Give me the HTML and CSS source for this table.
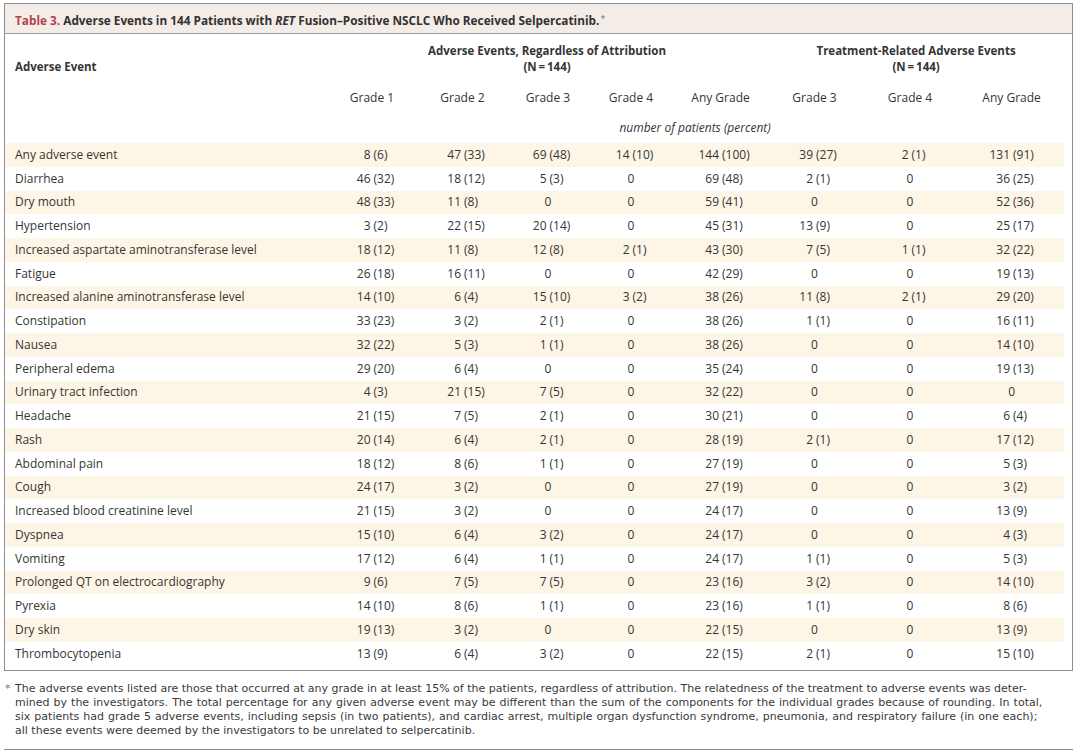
FILE: index.html
```html
<!DOCTYPE html>
<html lang="en">
<head>
<meta charset="utf-8">
<title>Table 3. Adverse Events</title>
<link rel="stylesheet" href="styles.css">
</head>
<body>
<div class="page">
  <div class="box">
    <div class="title"><span class="tnum">Table 3.</span> Adverse Events in 144 Patients with <i>RET</i> Fusion–Positive NSCLC Who Received Selpercatinib.<span class="star">*</span></div>
    <table class="ae">
      <colgroup>
        <col class="c-lbl"><col class="c-g1"><col class="c-g2"><col class="c-g3"><col class="c-g4"><col class="c-any"><col class="c-tg3"><col class="c-tg4"><col class="c-tany">
      </colgroup>
      <thead>
        <tr class="grp">
          <th class="lbl">Adverse Event</th>
          <th colspan="5">Adverse Events, Regardless of Attribution<br>(N&#8201;=&#8201;144)</th>
          <th colspan="3">Treatment-Related Adverse Events<br>(N&#8201;=&#8201;144)</th>
        </tr>
        <tr class="grades">
          <th class="lbl"></th>
          <th>Grade 1</th><th>Grade 2</th><th>Grade 3</th><th>Grade 4</th><th>Any Grade</th><th>Grade 3</th><th>Grade 4</th><th>Any Grade</th>
        </tr>
        <tr class="unit">
          <th class="lbl"></th>
          <th colspan="8">number of patients (percent)</th>
        </tr>
      </thead>
      <tbody>
        <tr class="sh"><td class="lbl">Any adverse event</td><td><span class="v"><span class="n">8</span><span class="p">(6)</span></span></td><td><span class="v"><span class="n">47</span><span class="p">(33)</span></span></td><td><span class="v"><span class="n">69</span><span class="p">(48)</span></span></td><td><span class="v"><span class="n">14</span><span class="p">(10)</span></span></td><td><span class="v"><span class="n">144</span><span class="p">(100)</span></span></td><td><span class="v"><span class="n">39</span><span class="p">(27)</span></span></td><td><span class="v"><span class="n">2</span><span class="p">(1)</span></span></td><td><span class="v"><span class="n">131</span><span class="p">(91)</span></span></td></tr>
        <tr><td class="lbl">Diarrhea</td><td><span class="v"><span class="n">46</span><span class="p">(32)</span></span></td><td><span class="v"><span class="n">18</span><span class="p">(12)</span></span></td><td><span class="v"><span class="n">5</span><span class="p">(3)</span></span></td><td class="z">0</td><td><span class="v"><span class="n">69</span><span class="p">(48)</span></span></td><td><span class="v"><span class="n">2</span><span class="p">(1)</span></span></td><td class="z">0</td><td><span class="v"><span class="n">36</span><span class="p">(25)</span></span></td></tr>
        <tr class="sh"><td class="lbl">Dry mouth</td><td><span class="v"><span class="n">48</span><span class="p">(33)</span></span></td><td><span class="v"><span class="n">11</span><span class="p">(8)</span></span></td><td class="z">0</td><td class="z">0</td><td><span class="v"><span class="n">59</span><span class="p">(41)</span></span></td><td class="z">0</td><td class="z">0</td><td><span class="v"><span class="n">52</span><span class="p">(36)</span></span></td></tr>
        <tr><td class="lbl">Hypertension</td><td><span class="v"><span class="n">3</span><span class="p">(2)</span></span></td><td><span class="v"><span class="n">22</span><span class="p">(15)</span></span></td><td><span class="v"><span class="n">20</span><span class="p">(14)</span></span></td><td class="z">0</td><td><span class="v"><span class="n">45</span><span class="p">(31)</span></span></td><td><span class="v"><span class="n">13</span><span class="p">(9)</span></span></td><td class="z">0</td><td><span class="v"><span class="n">25</span><span class="p">(17)</span></span></td></tr>
        <tr class="sh"><td class="lbl">Increased aspartate aminotransferase level</td><td><span class="v"><span class="n">18</span><span class="p">(12)</span></span></td><td><span class="v"><span class="n">11</span><span class="p">(8)</span></span></td><td><span class="v"><span class="n">12</span><span class="p">(8)</span></span></td><td><span class="v"><span class="n">2</span><span class="p">(1)</span></span></td><td><span class="v"><span class="n">43</span><span class="p">(30)</span></span></td><td><span class="v"><span class="n">7</span><span class="p">(5)</span></span></td><td><span class="v"><span class="n">1</span><span class="p">(1)</span></span></td><td><span class="v"><span class="n">32</span><span class="p">(22)</span></span></td></tr>
        <tr><td class="lbl">Fatigue</td><td><span class="v"><span class="n">26</span><span class="p">(18)</span></span></td><td><span class="v"><span class="n">16</span><span class="p">(11)</span></span></td><td class="z">0</td><td class="z">0</td><td><span class="v"><span class="n">42</span><span class="p">(29)</span></span></td><td class="z">0</td><td class="z">0</td><td><span class="v"><span class="n">19</span><span class="p">(13)</span></span></td></tr>
        <tr class="sh"><td class="lbl">Increased alanine aminotransferase level</td><td><span class="v"><span class="n">14</span><span class="p">(10)</span></span></td><td><span class="v"><span class="n">6</span><span class="p">(4)</span></span></td><td><span class="v"><span class="n">15</span><span class="p">(10)</span></span></td><td><span class="v"><span class="n">3</span><span class="p">(2)</span></span></td><td><span class="v"><span class="n">38</span><span class="p">(26)</span></span></td><td><span class="v"><span class="n">11</span><span class="p">(8)</span></span></td><td><span class="v"><span class="n">2</span><span class="p">(1)</span></span></td><td><span class="v"><span class="n">29</span><span class="p">(20)</span></span></td></tr>
        <tr><td class="lbl">Constipation</td><td><span class="v"><span class="n">33</span><span class="p">(23)</span></span></td><td><span class="v"><span class="n">3</span><span class="p">(2)</span></span></td><td><span class="v"><span class="n">2</span><span class="p">(1)</span></span></td><td class="z">0</td><td><span class="v"><span class="n">38</span><span class="p">(26)</span></span></td><td><span class="v"><span class="n">1</span><span class="p">(1)</span></span></td><td class="z">0</td><td><span class="v"><span class="n">16</span><span class="p">(11)</span></span></td></tr>
        <tr class="sh"><td class="lbl">Nausea</td><td><span class="v"><span class="n">32</span><span class="p">(22)</span></span></td><td><span class="v"><span class="n">5</span><span class="p">(3)</span></span></td><td><span class="v"><span class="n">1</span><span class="p">(1)</span></span></td><td class="z">0</td><td><span class="v"><span class="n">38</span><span class="p">(26)</span></span></td><td class="z">0</td><td class="z">0</td><td><span class="v"><span class="n">14</span><span class="p">(10)</span></span></td></tr>
        <tr><td class="lbl">Peripheral edema</td><td><span class="v"><span class="n">29</span><span class="p">(20)</span></span></td><td><span class="v"><span class="n">6</span><span class="p">(4)</span></span></td><td class="z">0</td><td class="z">0</td><td><span class="v"><span class="n">35</span><span class="p">(24)</span></span></td><td class="z">0</td><td class="z">0</td><td><span class="v"><span class="n">19</span><span class="p">(13)</span></span></td></tr>
        <tr class="sh"><td class="lbl">Urinary tract infection</td><td><span class="v"><span class="n">4</span><span class="p">(3)</span></span></td><td><span class="v"><span class="n">21</span><span class="p">(15)</span></span></td><td><span class="v"><span class="n">7</span><span class="p">(5)</span></span></td><td class="z">0</td><td><span class="v"><span class="n">32</span><span class="p">(22)</span></span></td><td class="z">0</td><td class="z">0</td><td class="z">0</td></tr>
        <tr><td class="lbl">Headache</td><td><span class="v"><span class="n">21</span><span class="p">(15)</span></span></td><td><span class="v"><span class="n">7</span><span class="p">(5)</span></span></td><td><span class="v"><span class="n">2</span><span class="p">(1)</span></span></td><td class="z">0</td><td><span class="v"><span class="n">30</span><span class="p">(21)</span></span></td><td class="z">0</td><td class="z">0</td><td><span class="v"><span class="n">6</span><span class="p">(4)</span></span></td></tr>
        <tr class="sh"><td class="lbl">Rash</td><td><span class="v"><span class="n">20</span><span class="p">(14)</span></span></td><td><span class="v"><span class="n">6</span><span class="p">(4)</span></span></td><td><span class="v"><span class="n">2</span><span class="p">(1)</span></span></td><td class="z">0</td><td><span class="v"><span class="n">28</span><span class="p">(19)</span></span></td><td><span class="v"><span class="n">2</span><span class="p">(1)</span></span></td><td class="z">0</td><td><span class="v"><span class="n">17</span><span class="p">(12)</span></span></td></tr>
        <tr><td class="lbl">Abdominal pain</td><td><span class="v"><span class="n">18</span><span class="p">(12)</span></span></td><td><span class="v"><span class="n">8</span><span class="p">(6)</span></span></td><td><span class="v"><span class="n">1</span><span class="p">(1)</span></span></td><td class="z">0</td><td><span class="v"><span class="n">27</span><span class="p">(19)</span></span></td><td class="z">0</td><td class="z">0</td><td><span class="v"><span class="n">5</span><span class="p">(3)</span></span></td></tr>
        <tr class="sh"><td class="lbl">Cough</td><td><span class="v"><span class="n">24</span><span class="p">(17)</span></span></td><td><span class="v"><span class="n">3</span><span class="p">(2)</span></span></td><td class="z">0</td><td class="z">0</td><td><span class="v"><span class="n">27</span><span class="p">(19)</span></span></td><td class="z">0</td><td class="z">0</td><td><span class="v"><span class="n">3</span><span class="p">(2)</span></span></td></tr>
        <tr><td class="lbl">Increased blood creatinine level</td><td><span class="v"><span class="n">21</span><span class="p">(15)</span></span></td><td><span class="v"><span class="n">3</span><span class="p">(2)</span></span></td><td class="z">0</td><td class="z">0</td><td><span class="v"><span class="n">24</span><span class="p">(17)</span></span></td><td class="z">0</td><td class="z">0</td><td><span class="v"><span class="n">13</span><span class="p">(9)</span></span></td></tr>
        <tr class="sh"><td class="lbl">Dyspnea</td><td><span class="v"><span class="n">15</span><span class="p">(10)</span></span></td><td><span class="v"><span class="n">6</span><span class="p">(4)</span></span></td><td><span class="v"><span class="n">3</span><span class="p">(2)</span></span></td><td class="z">0</td><td><span class="v"><span class="n">24</span><span class="p">(17)</span></span></td><td class="z">0</td><td class="z">0</td><td><span class="v"><span class="n">4</span><span class="p">(3)</span></span></td></tr>
        <tr><td class="lbl">Vomiting</td><td><span class="v"><span class="n">17</span><span class="p">(12)</span></span></td><td><span class="v"><span class="n">6</span><span class="p">(4)</span></span></td><td><span class="v"><span class="n">1</span><span class="p">(1)</span></span></td><td class="z">0</td><td><span class="v"><span class="n">24</span><span class="p">(17)</span></span></td><td><span class="v"><span class="n">1</span><span class="p">(1)</span></span></td><td class="z">0</td><td><span class="v"><span class="n">5</span><span class="p">(3)</span></span></td></tr>
        <tr class="sh"><td class="lbl">Prolonged QT on electrocardiography</td><td><span class="v"><span class="n">9</span><span class="p">(6)</span></span></td><td><span class="v"><span class="n">7</span><span class="p">(5)</span></span></td><td><span class="v"><span class="n">7</span><span class="p">(5)</span></span></td><td class="z">0</td><td><span class="v"><span class="n">23</span><span class="p">(16)</span></span></td><td><span class="v"><span class="n">3</span><span class="p">(2)</span></span></td><td class="z">0</td><td><span class="v"><span class="n">14</span><span class="p">(10)</span></span></td></tr>
        <tr><td class="lbl">Pyrexia</td><td><span class="v"><span class="n">14</span><span class="p">(10)</span></span></td><td><span class="v"><span class="n">8</span><span class="p">(6)</span></span></td><td><span class="v"><span class="n">1</span><span class="p">(1)</span></span></td><td class="z">0</td><td><span class="v"><span class="n">23</span><span class="p">(16)</span></span></td><td><span class="v"><span class="n">1</span><span class="p">(1)</span></span></td><td class="z">0</td><td><span class="v"><span class="n">8</span><span class="p">(6)</span></span></td></tr>
        <tr class="sh"><td class="lbl">Dry skin</td><td><span class="v"><span class="n">19</span><span class="p">(13)</span></span></td><td><span class="v"><span class="n">3</span><span class="p">(2)</span></span></td><td class="z">0</td><td class="z">0</td><td><span class="v"><span class="n">22</span><span class="p">(15)</span></span></td><td class="z">0</td><td class="z">0</td><td><span class="v"><span class="n">13</span><span class="p">(9)</span></span></td></tr>
        <tr><td class="lbl">Thrombocytopenia</td><td><span class="v"><span class="n">13</span><span class="p">(9)</span></span></td><td><span class="v"><span class="n">6</span><span class="p">(4)</span></span></td><td><span class="v"><span class="n">3</span><span class="p">(2)</span></span></td><td class="z">0</td><td><span class="v"><span class="n">22</span><span class="p">(15)</span></span></td><td><span class="v"><span class="n">2</span><span class="p">(1)</span></span></td><td class="z">0</td><td><span class="v"><span class="n">15</span><span class="p">(10)</span></span></td></tr>
      </tbody>
    </table>
  </div>
  <div class="note">
    <span class="ln first"><span class="mark">*</span>The adverse events listed are those that occurred at any grade in at least 15% of the patients, regardless of attribution. The relatedness of the treatment to adverse events was deter-</span>
    <span class="ln wide2">mined by the investigators. The total percentage for any given adverse event may be different than the sum of the components for the individual grades because of rounding. In total,</span>
    <span class="ln wide3">six patients had grade 5 adverse events, including sepsis (in two patients), and cardiac arrest, multiple organ dysfunction syndrome, pneumonia, and respiratory failure (in one each);</span>
    <span class="ln">all these events were deemed by the investigators to be unrelated to selpercatinib.</span>
  </div>
  <div class="rule"></div>
</div>
</body>
</html>
```

FILE: styles.css
```css
html, body {
  margin: 0;
  padding: 0;
  background: #ffffff;
}

body {
  font-family: "Open Sans", "Noto Sans", sans-serif;
  font-size: 12px;
  color: #353535;
}

.page {
  width: 1080px;
  height: 754px;
  padding: 3px 0 0 4px;
  box-sizing: border-box;
}

.box {
  width: 1069px;
  box-sizing: border-box;
  border: 1px solid #8e8e8e;
  padding-bottom: 4px;
}

.title {
  height: 30px;
  box-sizing: border-box;
  border-bottom: 1px solid #9a9a9a;
  background: #f3ece7;
  padding-left: 10px;
  line-height: 29px;
  font-weight: 700;
  font-size: 11.8px;
  color: #333333;
  white-space: nowrap;
}

.title .tnum {
  color: #b5414e;
}

.title i {
  font-style: italic;
}

.title .star {
  font-weight: 400;
  font-size: 9px;
  color: #777777;
  vertical-align: 3px;
  margin-left: 1px;
}

.ae {
  width: 1059px;
  border-collapse: collapse;
  table-layout: fixed;
}

.c-lbl { width: 321px; }
.c-g1 { width: 92px; }
.c-g2 { width: 89px; }
.c-g3 { width: 82px; }
.c-g4 { width: 84px; }
.c-any { width: 95px; }
.c-tg3 { width: 93px; }
.c-tg4 { width: 98px; }
.c-tany { width: 105px; }

.ae th,
.ae td {
  padding: 0;
  line-height: 16px;
  text-align: center;
  white-space: nowrap;
}

.ae th {
  font-weight: 400;
}

.ae .lbl {
  text-align: left;
  padding-left: 10px;
}

.ae .grp th {
  padding-top: 9px;
  font-weight: 700;
  font-size: 11.5px;
  vertical-align: bottom;
}

.ae .grades th {
  padding: 15px 0 7px;
}

.ae .unit th {
  padding: 7px 0 7px;
  font-style: italic;
}

.ae tbody tr {
  height: 23.76px;
}

.ae tbody td {
  vertical-align: middle;
}

.ae tbody tr.sh {
  background: #fdf5e6;
}

.v {
  display: grid;
  grid-template-columns: 1fr 1fr;
  column-gap: 3px;
}

.v .n {
  text-align: right;
}

.v .p {
  text-align: left;
}

.note {
  margin-top: 11px;
  padding-left: 11px;
  font-family: "DejaVu Sans", "Open Sans", sans-serif;
  font-size: 11px;
  line-height: 14px;
  color: #3a3a3a;
}

.ln {
  display: block;
  white-space: nowrap;
}

.ln.first {
  text-indent: -10px;
}

.ln.wide2 {
  word-spacing: 0.55px;
}

.ln.wide3 {
  word-spacing: 0.55px;
}

.mark {
  display: inline-block;
  width: 10px;
  text-indent: 0;
  color: #777777;
}

.rule {
  margin-top: 11px;
  width: 1069px;
  height: 1px;
  background: #8a8a8a;
}
```
